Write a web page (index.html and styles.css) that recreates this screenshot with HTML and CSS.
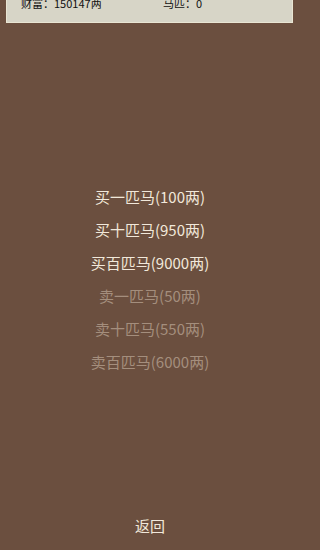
FILE: index.html
```html
<!DOCTYPE html>
<html>
<head>
<meta charset="utf-8">
<link rel="stylesheet" href="styles.css">
</head>
<body>
<div class="page">
  <div class="panel">
    <div class="stats">
      <span class="stat wealth">财富：150147两</span>
      <span class="stat horses">马匹：0</span>
    </div>
  </div>
  <div class="menu">
    <div class="item buy">买一匹马(100两)</div>
    <div class="item buy">买十匹马(950两)</div>
    <div class="item buy">买百匹马(9000两)</div>
    <div class="item sell">卖一匹马(50两)</div>
    <div class="item sell">卖十匹马(550两)</div>
    <div class="item sell">卖百匹马(6000两)</div>
  </div>
  <div class="back">返回</div>
</div>
</body>
</html>
```
FILE: styles.css
```css
html, body {
  margin: 0;
  padding: 0;
  background: #6b4f3f;
}
.page {
  width: 300px;
  height: 550px;
  display: flex;
  flex-direction: column;
  font-family: "Noto Sans CJK SC", "Noto Sans", sans-serif;
  overflow: hidden;
}
.panel {
  margin: 0 7px 0 6px;
  height: 22px;
  background: #d7d5c7;
  border: 1px solid #e9e5d3;
  border-top: none;
  overflow: hidden;
}
.stats {
  display: flex;
  margin-top: -5px;
  font-size: 11px;
  line-height: 16px;
  color: #111;
}
.wealth {
  margin-left: 14px;
  width: 142px;
}
.menu {
  margin-top: 157px;
  display: flex;
  flex-direction: column;
  align-items: center;
}
.item {
  font-size: 15px;
  line-height: 33px;
  height: 33px;
}
.buy {
  color: #f1e8da;
}
.sell {
  color: #a48e7d;
}
.back {
  margin-top: 131px;
  text-align: center;
  font-size: 15px;
  line-height: 33px;
  color: #f1e8da;
}
```
